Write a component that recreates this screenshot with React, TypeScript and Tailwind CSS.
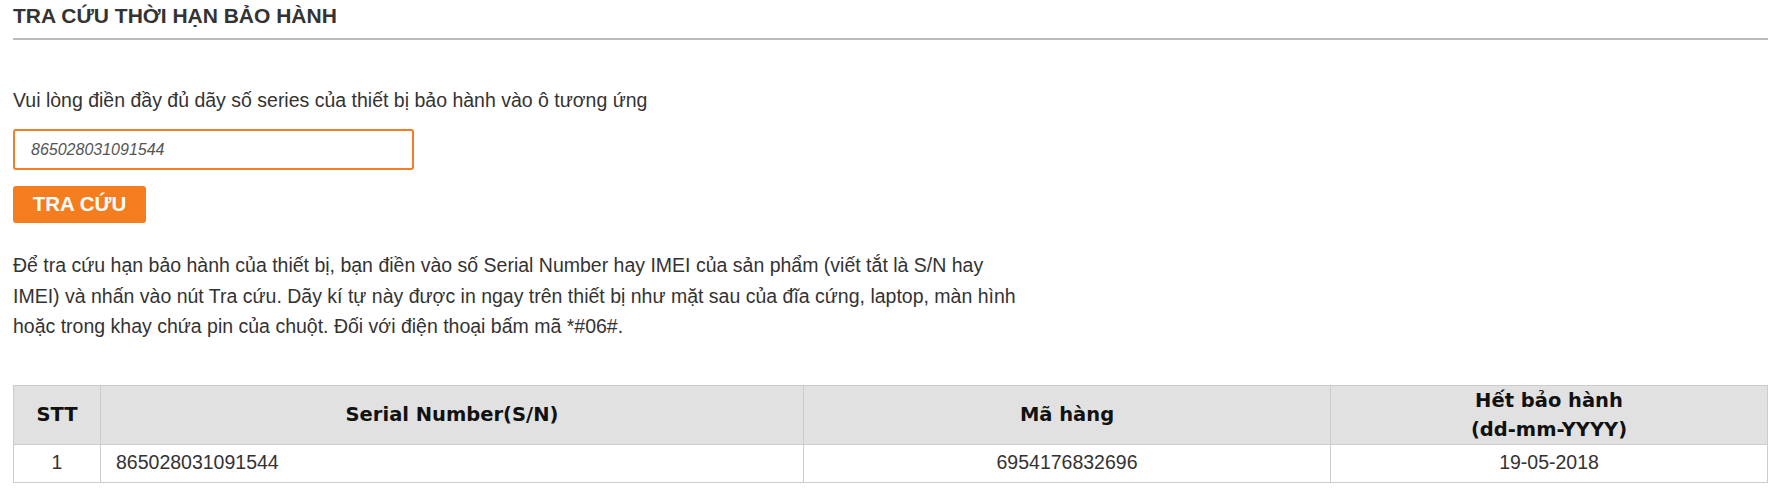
import React from 'react'

const rows = [
  { stt: 1, serial: '865028031091544', code: '6954176832696', expire: '19-05-2018' },
]

export default function App() {
  return (
    <div className="min-h-[497px] bg-white pl-[13px] pr-[17px] text-[#333] font-['Liberation_Sans',Arial,sans-serif]">
      {/* Title */}
      <div className="border-b-2 border-[#bbbbbb] pt-[4px] pb-[10px]">
        <h1 className="text-[21px] font-bold leading-[24px] text-[#333]">TRA CỨU THỜI HẠN BẢO HÀNH</h1>
      </div>

      <p className="mt-[49px] text-[19.5px] leading-[22px]">
        Vui lòng điền đầy đủ dãy số series của thiết bị bảo hành vào ô tương ứng
      </p>

      <input
        type="text"
        placeholder="865028031091544"
        className="mt-[18px] block h-[41px] w-[401px] rounded-[3px] border-2 border-[#f47d25] px-[16px] text-[16px] italic outline-none placeholder:text-[#555]"
      />

      <button className="mt-[16px] block h-[37px] w-[133px] rounded-[3px] bg-[#f47d20] text-[20.5px] font-bold text-white">
        TRA CỨU
      </button>

      <p className="mt-[27px] max-w-[1022px] text-[19.5px] leading-[30.5px]">
        Để tra cứu hạn bảo hành của thiết bị, bạn điền vào số Serial Number hay IMEI của sản phẩm (viết tắt là S/N hay
        IMEI) và nhấn vào nút Tra cứu. Dãy kí tự này được in ngay trên thiết bị như mặt sau của đĩa cứng, laptop, màn hình
        hoặc trong khay chứa pin của chuột. Đối với điện thoại bấm mã *#06#.
      </p>

      <table className="mt-[43px] w-full border-collapse text-[19.5px]">
        <thead>
          <tr className="bg-[#e1e1e1] font-['DejaVu_Sans',Verdana,sans-serif] text-[19.5px] font-bold leading-[29px] text-[#111]">
            <th className="h-[59px] w-[87px] border border-[#cccccc] px-2">STT</th>
            <th className="w-[703px] border border-[#cccccc] px-2">Serial Number(S/N)</th>
            <th className="w-[527px] border border-[#cccccc] px-2">Mã hàng</th>
            <th className="border border-[#cccccc] px-2">
              Hết bảo hành
              <br />
              (dd-mm-YYYY)
            </th>
          </tr>
        </thead>
        <tbody>
          {rows.map((r) => (
            <tr key={r.stt} className="text-[#333]">
              <td className="h-[38px] border border-[#cccccc] text-center">{r.stt}</td>
              <td className="border border-[#cccccc] px-[15px]">{r.serial}</td>
              <td className="border border-[#cccccc] text-center">{r.code}</td>
              <td className="border border-[#cccccc] text-center">{r.expire}</td>
            </tr>
          ))}
        </tbody>
      </table>
    </div>
  )
}
